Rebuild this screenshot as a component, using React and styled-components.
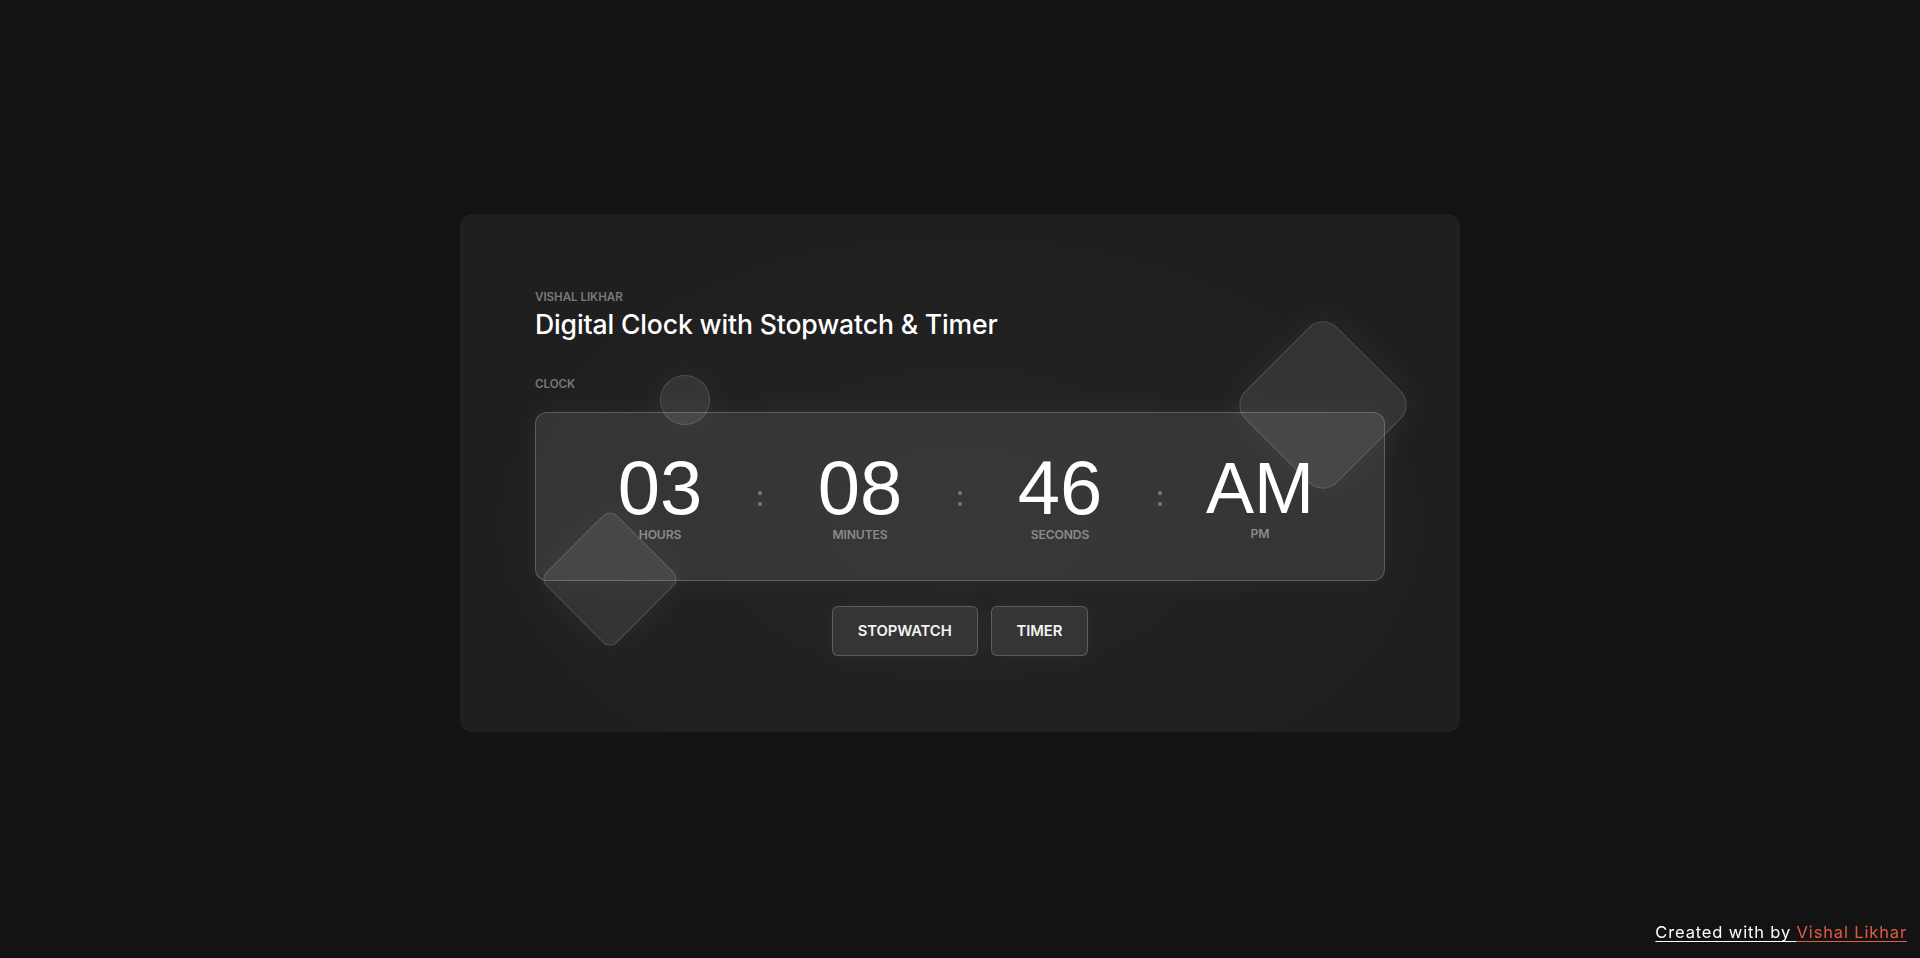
import React from 'react';
import styled, { createGlobalStyle } from 'styled-components';

const colors = {
    page: '#131313',
    card: '#1f1f1f',
    white: '#ffffff',
    muted: '#7a7a7a',
    label: '#8a8a8a',
    accent: '#e45a43',
};

const GlobalStyle = createGlobalStyle`
    html, body {
        margin: 0;
        padding: 0;
        background: ${colors.page};
        font-family: Inter, "Open Sans", "Liberation Sans", sans-serif;
        color: ${colors.white};
    }

    * {
        box-sizing: border-box;
    }
`;

const Page = styled.main`
    min-height: 100vh;
    display: flex;
    align-items: center;
    justify-content: center;
    padding-bottom: 12px;
`;

const Card = styled.section`
    position: relative;
    width: 1000px;
    padding: 75px 75px 76px;
    border-radius: 12px;
    background: radial-gradient(ellipse at 50% 60%, #242424 0%, ${colors.card} 70%);
`;

const Shape = styled.span`
    position: absolute;
    background: rgba(255, 255, 255, 0.09);
    border: 1px solid rgba(255, 255, 255, 0.14);
    box-shadow: 0 0 40px rgba(255, 255, 255, 0.06);
    pointer-events: none;
    z-index: 2;
`;

const Circle = styled(Shape)`
    left: 200px;
    top: 161px;
    width: 50px;
    height: 50px;
    border-radius: 50%;
    z-index: 0;
`;

const Diamond = styled(Shape)`
    width: ${(p) => p.$size}px;
    height: ${(p) => p.$size}px;
    left: ${(p) => p.$x - p.$size / 2}px;
    top: ${(p) => p.$y - p.$size / 2}px;
    border-radius: ${(p) => p.$radius}px;
    transform: rotate(45deg);
`;

const Eyebrow = styled.div`
    font-size: 11.6px;
    line-height: 16px;
    font-weight: 600;
    letter-spacing: -0.05px;
    color: ${colors.muted};
    text-transform: uppercase;
`;

const Title = styled.h1`
    margin: 1px 0 0;
    font-size: 26.6px;
    line-height: 36px;
    font-weight: 500;
    letter-spacing: -0.15px;
    color: ${colors.white};
`;

const SectionLabel = styled(Eyebrow)`
    margin-top: 34px;
`;

const ClockPanel = styled.div`
    position: relative;
    z-index: 1;
    margin-top: 20px;
    height: 169px;
    padding-top: 37px;
    display: flex;
    justify-content: center;
    align-items: flex-start;
    border-radius: 12px;
    border: 1px solid rgba(255, 255, 255, 0.2);
    background: rgba(255, 255, 255, 0.095);
    box-shadow: 0 0 30px rgba(255, 255, 255, 0.05);
`;

const Unit = styled.div`
    width: 160px;
    display: flex;
    flex-direction: column;
    align-items: center;
`;

const Value = styled.div`
    font-family: "Liberation Sans", Arial, sans-serif;
    font-size: ${(p) => (p.$small ? 72 : 76)}px;
    line-height: 76px;
    font-weight: 400;
    color: ${colors.white};
`;

const UnitLabel = styled.div`
    margin-top: ${(p) => (p.$raised ? 1 : 2)}px;
    font-size: 12.2px;
    line-height: 14px;
    font-weight: 600;
    letter-spacing: -0.15px;
    color: ${colors.label};
    text-transform: uppercase;
`;

const Colon = styled.div`
    width: 40px;
    margin-top: 41px;
    display: flex;
    flex-direction: column;
    align-items: center;
    gap: 7px;

    &::before,
    &::after {
        content: '';
        width: 4px;
        height: 4px;
        border-radius: 50%;
        background: ${colors.muted};
    }
`;

const ButtonRow = styled.div`
    margin-top: 25px;
    display: flex;
    justify-content: center;
    gap: 13px;
`;

const Button = styled.button`
    height: 50px;
    padding: 0 25px;
    border-radius: 6px;
    border: 1px solid rgba(255, 255, 255, 0.2);
    background: rgba(255, 255, 255, 0.09);
    box-shadow: 0 0 25px rgba(255, 255, 255, 0.05);
    color: #f2f2f2;
    font-family: Inter, "Open Sans", sans-serif;
    font-size: 14.8px;
    font-weight: 600;
    letter-spacing: -0.1px;
    text-transform: uppercase;
    cursor: pointer;
`;

const Footer = styled.footer`
    position: fixed;
    right: 13px;
    bottom: 14px;
    font-size: 16.5px;
    line-height: 24px;
    letter-spacing: 0.85px;
    color: ${colors.white};
    text-decoration: underline;
    text-underline-offset: 3px;
`;

const FooterLink = styled.a`
    color: ${colors.accent};
    text-decoration: underline;
`;

const time = [
    { value: '03', label: 'Hours' },
    { value: '08', label: 'Minutes' },
    { value: '46', label: 'Seconds' },
];

/**
 * Digital clock card.
 */
const App = () => (
    <>
        <GlobalStyle />
        <Page>
            <Card>
                <Circle />
                <Diamond $size={100} $radius={10} $x={149.5} $y={365} />
                <Diamond $size={130} $radius={20} $x={862.5} $y={191} />

                <Eyebrow>Vishal Likhar</Eyebrow>
                <Title>Digital Clock with Stopwatch &amp; Timer</Title>

                <SectionLabel>Clock</SectionLabel>
                <ClockPanel>
                    {time.map((t) => (
                        <React.Fragment key={t.label}>
                            <Unit>
                                <Value>{t.value}</Value>
                                <UnitLabel>{t.label}</UnitLabel>
                            </Unit>
                            <Colon />
                        </React.Fragment>
                    ))}
                    <Unit>
                        <Value $small>AM</Value>
                        <UnitLabel $raised>PM</UnitLabel>
                    </Unit>
                </ClockPanel>

                <ButtonRow>
                    <Button type="button">Stopwatch</Button>
                    <Button type="button">Timer</Button>
                </ButtonRow>
            </Card>
        </Page>
        <Footer>
            Created with by <FooterLink href="#vishal">Vishal Likhar</FooterLink>
        </Footer>
    </>
);

export default App;
